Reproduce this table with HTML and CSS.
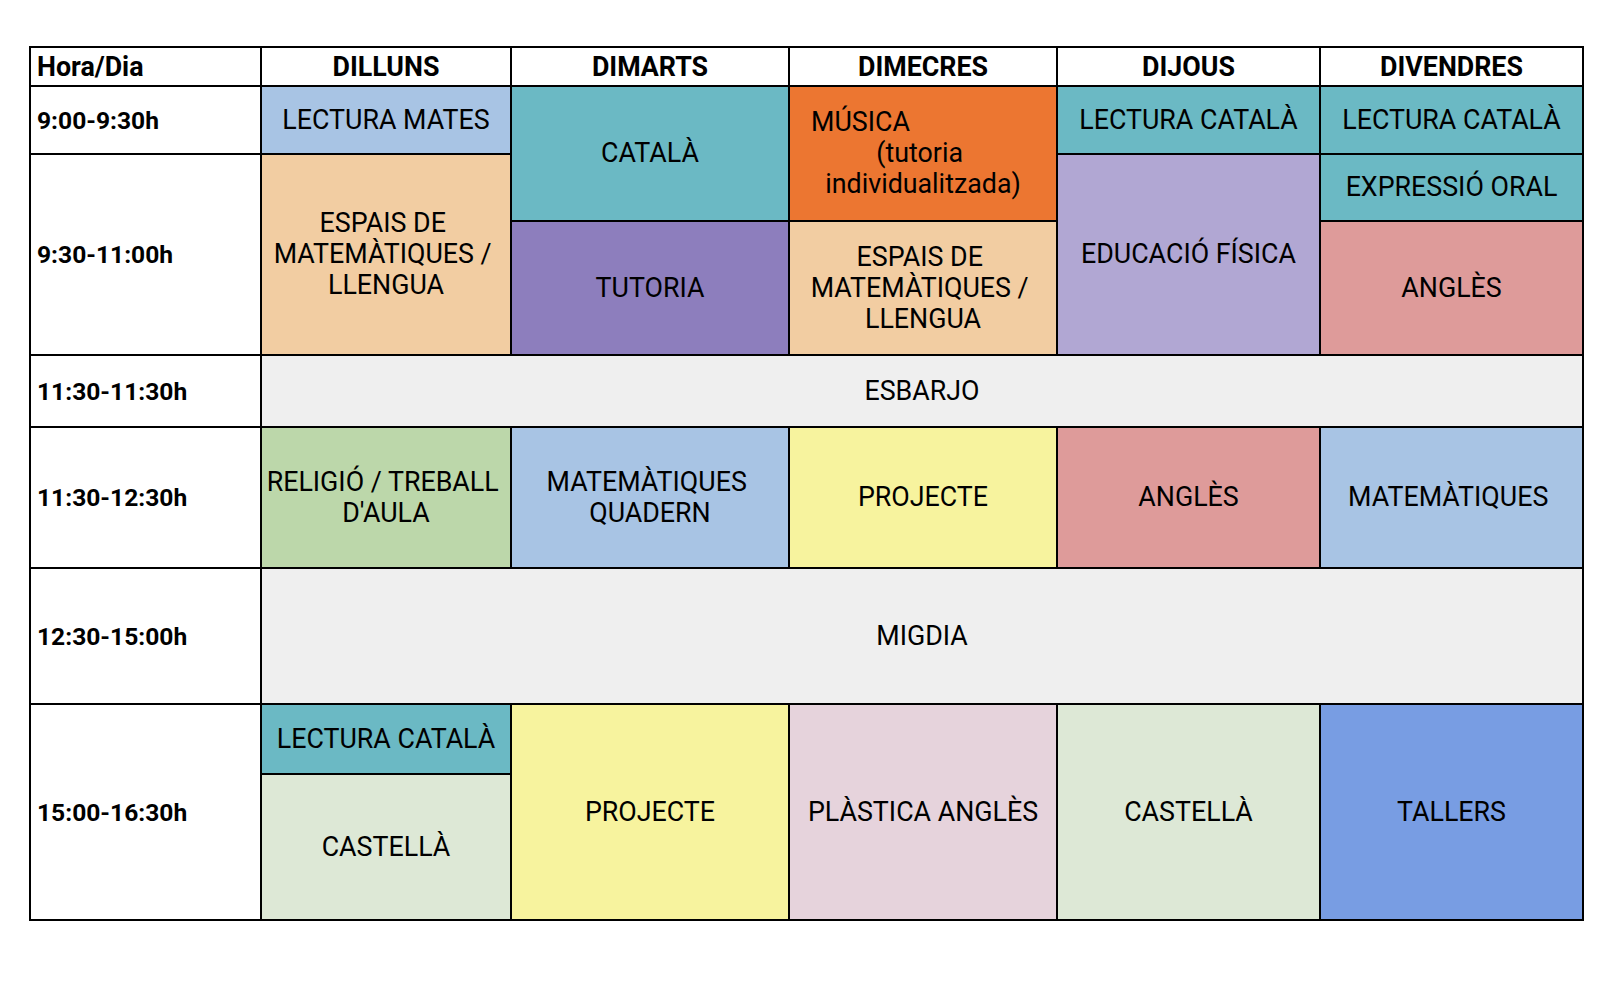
FILE: index.html
```html
<!DOCTYPE html>
<html lang="ca">
<head>
<meta charset="utf-8">
<title>Horari</title>
<link rel="stylesheet" href="styles.css">
</head>
<body>
<div class="page">
  <div class="timetable">
    <div class="cell head first c1 r1">Hora/Dia</div>
    <div class="cell head c2 r1">DILLUNS</div>
    <div class="cell head c3 r1">DIMARTS</div>
    <div class="cell head c4 r1">DIMECRES</div>
    <div class="cell head c5 r1">DIJOUS</div>
    <div class="cell head c6 r1">DIVENDRES</div>

    <div class="cell time c1 r2">9:00-9:30h</div>
    <div class="cell time c1 r3 rs2">9:30-11:00h</div>
    <div class="cell time c1 r5">11:30-11:30h</div>
    <div class="cell time c1 r6">11:30-12:30h</div>
    <div class="cell time c1 r7">12:30-15:00h</div>
    <div class="cell time c1 r8 rs2">15:00-16:30h</div>

    <div class="cell bg-lblue c2 r2">LECTURA MATES</div>
    <div class="cell bg-beige c2 r3 rs2">ESPAIS DE&nbsp; MATEMÀTIQUES /&nbsp; LLENGUA</div>
    <div class="cell bg-green c2 r6">RELIGIÓ / TREBALL&nbsp; D'AULA</div>
    <div class="cell bg-teal c2 r8">LECTURA CATALÀ</div>
    <div class="cell bg-pale c2 r9">CASTELLÀ</div>

    <div class="cell bg-teal c3 r2 rs2">CATALÀ</div>
    <div class="cell bg-purple c3 r4">TUTORIA</div>
    <div class="cell bg-lblue c3 r6">MATEMÀTIQUES&nbsp; QUADERN</div>
    <div class="cell bg-yellow c3 r8 rs2">PROJECTE</div>

    <div class="cell music bg-orange c4 r2 rs2">
      <span class="music-first">MÚSICA</span>
      <span class="music-line">(tutoria&nbsp;</span>
      <span class="music-line">individualitzada)</span>
    </div>
    <div class="cell bg-beige c4 r4">ESPAIS DE&nbsp; MATEMÀTIQUES /&nbsp; LLENGUA</div>
    <div class="cell bg-yellow c4 r6">PROJECTE</div>
    <div class="cell bg-pink c4 r8 rs2">PLÀSTICA ANGLÈS</div>

    <div class="cell bg-teal c5 r2">LECTURA CATALÀ</div>
    <div class="cell bg-lilac c5 r3 rs2">EDUCACIÓ FÍSICA</div>
    <div class="cell bg-rose c5 r6">ANGLÈS</div>
    <div class="cell bg-pale c5 r8 rs2">CASTELLÀ</div>

    <div class="cell bg-teal c6 r2">LECTURA CATALÀ</div>
    <div class="cell bg-teal c6 r3">EXPRESSIÓ ORAL</div>
    <div class="cell bg-rose c6 r4">ANGLÈS</div>
    <div class="cell bg-lblue c6 r6">MATEMÀTIQUES&nbsp;</div>
    <div class="cell bg-blue c6 r8 rs2">TALLERS</div>

    <div class="cell bg-grey c2 cs5 r5">ESBARJO</div>
    <div class="cell bg-grey c2 cs5 r7">MIGDIA</div>
  </div>
</div>
</body>
</html>
```

FILE: styles.css
```css
html, body {
  margin: 0;
  padding: 0;
  background: #ffffff;
}

.page {
  padding: 46px 0 0 29px;
  font-family: Roboto, "Liberation Sans", Arial, sans-serif;
  color: #000000;
}

.timetable {
  display: grid;
  width: max-content;
  grid-template-columns: 229px 248px 276px 266px 261px 261px;
  grid-template-rows: 37px 66px 65px 132px 70px 139px 134px 68px 144px;
  gap: 2px;
  padding: 2px;
  background: #000000;
}

.cell {
  display: flex;
  align-items: center;
  justify-content: center;
  text-align: center;
  padding: 0 2px;
  font-size: 26.8px;
  line-height: 31px;
  background: #ffffff;
  overflow: hidden;
}

.head {
  font-weight: 700;
  padding-top: 2px;
}

.head.first {
  justify-content: flex-start;
  text-align: left;
  padding-left: 6px;
}

.time {
  justify-content: flex-start;
  text-align: left;
  padding-left: 6px;
  font-size: 24.6px;
  font-weight: 700;
}

.music {
  flex-direction: column;
  align-items: stretch;
}

.music-first {
  display: block;
  text-align: left;
  padding-left: 19px;
}

.music-line {
  display: block;
  text-align: center;
}

/* grid placement */
.c1 { grid-column: 1; }
.c2 { grid-column: 2; }
.c3 { grid-column: 3; }
.c4 { grid-column: 4; }
.c5 { grid-column: 5; }
.c6 { grid-column: 6; }
.c2.cs5 { grid-column: 2 / span 5; }

.r1 { grid-row: 1; }
.r2 { grid-row: 2; }
.r3 { grid-row: 3; }
.r4 { grid-row: 4; }
.r5 { grid-row: 5; }
.r6 { grid-row: 6; }
.r7 { grid-row: 7; }
.r8 { grid-row: 8; }
.r9 { grid-row: 9; }
.r2.rs2 { grid-row: 2 / span 2; }
.r3.rs2 { grid-row: 3 / span 2; }
.r8.rs2 { grid-row: 8 / span 2; }

/* colours */
.bg-lblue  { background: #a8c4e4; }
.bg-teal   { background: #6bb9c4; }
.bg-orange { background: #ec7631; }
.bg-beige  { background: #f2cda2; }
.bg-purple { background: #8d7ebd; }
.bg-lilac  { background: #b1a7d3; }
.bg-rose   { background: #de9b9a; }
.bg-grey   { background: #efefef; }
.bg-green  { background: #bcd7aa; }
.bg-yellow { background: #f7f39e; }
.bg-pink   { background: #e6d3dc; }
.bg-pale   { background: #dde8d6; }
.bg-blue   { background: #789de3; }
```
